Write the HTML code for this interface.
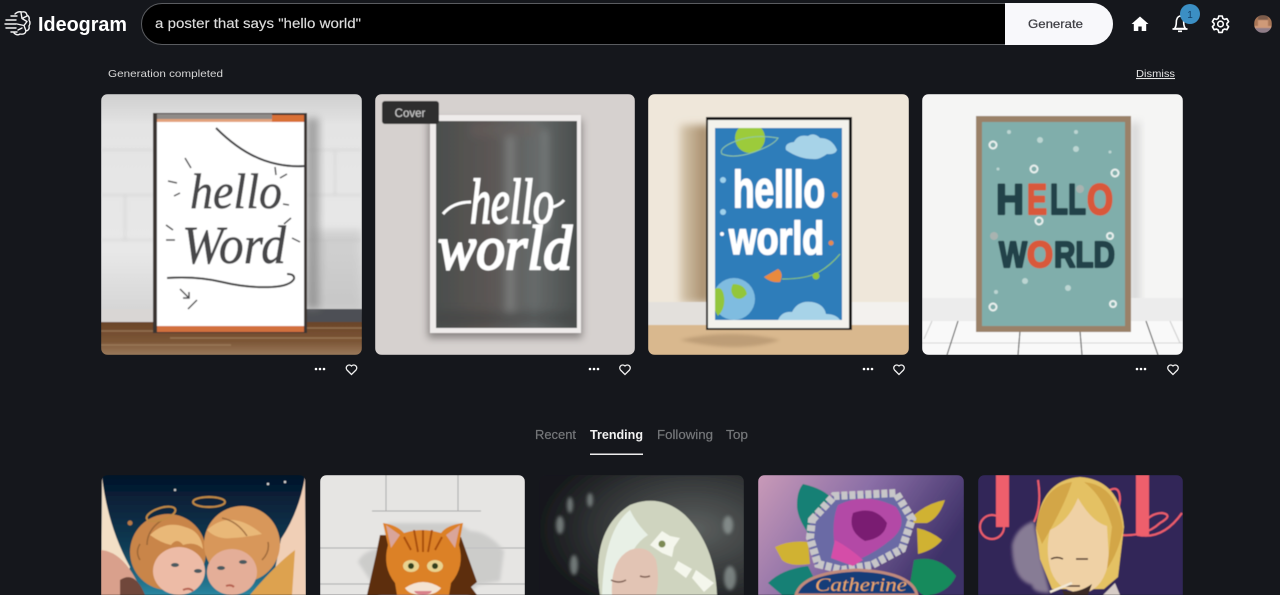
<!DOCTYPE html>
<html><head><meta charset="utf-8"><title>Ideogram</title>
<style>
html,body{margin:0;padding:0;width:1280px;height:595px;overflow:hidden;background:#15171c}
svg{display:block;position:absolute;left:0;top:0}
text{font-family:"Liberation Sans",sans-serif}
.s{font-family:"Liberation Serif",serif;font-style:italic}
.b{font-family:"Liberation Sans",sans-serif;font-weight:700}
</style></head><body>
<svg width="1280" height="595" viewBox="0 0 1280 595" xmlns="http://www.w3.org/2000/svg">
<defs>
<linearGradient id="wall1" x1="0" y1="0" x2="0" y2="1"><stop offset="0" stop-color="#cfcfcf"/><stop offset=".12" stop-color="#e4e4e4"/><stop offset=".6" stop-color="#e8e8e8"/><stop offset="1" stop-color="#c8c8c8"/></linearGradient>
<linearGradient id="floor1" x1="0" y1="0" x2="0" y2="1"><stop offset="0" stop-color="#6a4428"/><stop offset=".6" stop-color="#7d5737"/><stop offset="1" stop-color="#9a7a5b"/></linearGradient>
<linearGradient id="rose" x1="0" y1="0" x2="1" y2=".4"><stop offset="0" stop-color="#c99ab8"/><stop offset=".5" stop-color="#8a6ea6"/><stop offset="1" stop-color="#3e3168"/></linearGradient>
<radialGradient id="fairy" cx=".75" cy=".45" r=".75"><stop offset="0" stop-color="#5c605f"/><stop offset="1" stop-color="#17191c"/></radialGradient>
<linearGradient id="ang" x1="0" y1="0" x2="0" y2="1"><stop offset="0" stop-color="#04142a"/><stop offset=".6" stop-color="#103c55"/><stop offset="1" stop-color="#2a86a0"/></linearGradient>
<linearGradient id="chalk" x1="0" y1="0" x2="1" y2="0"><stop offset="0" stop-color="#4b4f4e"/><stop offset=".35" stop-color="#5a5553"/><stop offset=".7" stop-color="#666a6a"/><stop offset="1" stop-color="#4a4e4d"/></linearGradient>
<linearGradient id="shadow3" x1="0" y1="0" x2="1" y2="0"><stop offset="0" stop-color="#d8c9b0"/><stop offset="1" stop-color="#9f8360"/></linearGradient>
<filter id="bl" x="-50%" y="-20%" width="200%" height="140%"><feGaussianBlur stdDeviation="4"/></filter>
<filter id="sb" x="-30%" y="-30%" width="160%" height="160%"><feGaussianBlur stdDeviation="1.500"/></filter>
<filter id="tb" x="0" y="0" width="100%" height="100%"><feGaussianBlur stdDeviation=".5"/></filter>
<clipPath id="c1"><rect x="101" y="94" width="261" height="261" rx="7"/></clipPath>
<clipPath id="c2"><rect x="375" y="94" width="260" height="261" rx="7"/></clipPath>
<clipPath id="c3"><rect x="648" y="94" width="261" height="261" rx="7"/></clipPath>
<clipPath id="c4"><rect x="922" y="94" width="261" height="261" rx="7"/></clipPath>
<clipPath id="p2"><rect x="436" y="121" width="141" height="207"/></clipPath>
<clipPath id="p3"><rect x="715" y="128" width="127" height="192"/></clipPath>
<clipPath id="av"><circle cx="1263" cy="24" r="9"/></clipPath>
<clipPath id="d1"><path d="M101 482a7 7 0 0 1 7-7h191a7 7 0 0 1 7 7v113H101z"/></clipPath>
<clipPath id="d2"><path d="M320 482a7 7 0 0 1 7-7h191a7 7 0 0 1 7 7v113H320z"/></clipPath>
<clipPath id="d3"><path d="M539 482a7 7 0 0 1 7-7h191a7 7 0 0 1 7 7v113H539z"/></clipPath>
<clipPath id="d4"><path d="M758 482a7 7 0 0 1 7-7h192a7 7 0 0 1 7 7v113H758z"/></clipPath>
<clipPath id="d5"><path d="M978 482a7 7 0 0 1 7-7h191a7 7 0 0 1 7 7v113H978z"/></clipPath>
</defs>

<rect width="1280" height="595" fill="#15171c"/>

<!-- logo -->
<g fill="none" stroke="#f2f2f2" stroke-width="1.400" stroke-linecap="round" stroke-linejoin="round">
<path d="M15 14q3-3 7-2q4-1 5 3q3 2 2 5q2 3 0 6q1 4-3 5q-1 4-6 3q-3 2-6-1"/>
<path d="M6 20h10M5 24h11M6 28h10M11 16h6M11 32h6"/>
<path d="M21 12.500l1 6l5 3l-3 4l2 5.500M27 16l-5 2.500M22 28l-4 2M24 25.500l-7-1.500"/>
</g>
<text x="38" y="31" font-size="20" fill="#fff" class="b" textLength="89" lengthAdjust="spacingAndGlyphs">Ideogram</text>

<!-- prompt -->
<rect x="141.500" y="3.500" width="971" height="41" rx="20.500" fill="#000" stroke="#5a5c60"/>
<path d="M1005 3h87a21 21 0 0 1 21 21a21 21 0 0 1-21 21h-87z" fill="#f8f8fb"/>
<text x="155" y="28" font-size="13.500" fill="#dcdcdc" stroke="#dcdcdc" stroke-width=".15" textLength="206" lengthAdjust="spacingAndGlyphs">a poster that says "hello world"</text>
<text x="1028" y="28" font-size="12" fill="#3f3f45" stroke="#3f3f45" stroke-width=".25" textLength="55" lengthAdjust="spacingAndGlyphs">Generate</text>

<!-- nav icons -->
<path d="M1140 16.500l-8.500 7.500h2.300v7h4.500v-4.500h3.400v4.500h4.500v-7h2.300z" fill="#fff"/>
<path d="M1174.500 28.500q1.800-2 1.800-6q0-5.500 3.700-6.500q3.700 1 3.700 6.500q0 4 1.800 6z" fill="none" stroke="#fff" stroke-width="1.600"/>
<path d="M1172.500 29h15M1178 31.300h4" stroke="#fff" stroke-width="1.700" fill="none"/>
<circle cx="1190" cy="14" r="10" fill="#3b8fc4"/>
<text x="1190" y="18" font-size="10" fill="#12406a" text-anchor="middle">1</text>
<g fill="none" stroke="#fff" stroke-width="1.600" stroke-linejoin="round">
<circle cx="1220.500" cy="24" r="2.800"/>
<path d="M1218.800 16h3.400l.6 2.400l1.800 1l2.300-.7l1.700 3l-1.700 1.700v1.600l1.700 1.700l-1.700 3l-2.300-.7l-1.800 1l-.6 2.400h-3.400l-.6-2.400l-1.800-1l-2.300.7l-1.700-3l1.700-1.700v-1.600l-1.700-1.700l1.700-3l2.300.7l1.800-1z"/>
</g>
<g clip-path="url(#av)"><g filter="url(#tb)">
<rect x="1254" y="15" width="18" height="18" fill="#cf9a78"/>
<rect x="1254" y="15" width="18" height="5" fill="#7b5c4b"/>
<path d="M1254 15h4v11h-4zM1268 15h4v11h-4z" fill="#a87657"/>
<rect x="1254" y="28" width="18" height="5" fill="#8f7d88"/>
</g></g>

<!-- status -->
<text x="108" y="77" font-size="10.500" fill="#d6d6d6" textLength="115" lengthAdjust="spacingAndGlyphs">Generation completed</text>
<text x="1136" y="77" font-size="10.500" fill="#e6e6e6" text-decoration="underline" textLength="39" lengthAdjust="spacingAndGlyphs">Dismiss</text>

<!-- CARD 1 -->
<g clip-path="url(#c1)"><g filter="url(#tb)">
<rect x="101" y="94" width="261" height="261" fill="url(#wall1)"/>
<g stroke="#d4d4d4" stroke-width="1.500" fill="none" filter="url(#sb)">
<path d="M101 150h52M101 195h52M101 240h52M307 150h55M307 195h55M307 240h55M125 195v45M335 150v45M325 240v40"/>
</g>
<path d="M310 230h52v80h-52z" fill="#b8b8b8" opacity=".5" filter="url(#bl)"/>
<rect x="101" y="309" width="60" height="13" fill="#d9d6d4"/>
<rect x="307" y="309" width="55" height="13" fill="#4e5055"/>
<rect x="101" y="322" width="261" height="33" fill="url(#floor1)"/>
<path d="M101 331h100M170 338h192M101 345h130M250 328h112" stroke="#a98a68" stroke-width="1.500" opacity=".6"/>
<rect x="306" y="118" width="13" height="191" fill="#7f7f7f" opacity=".65" filter="url(#bl)"/>
<rect x="153" y="113" width="154" height="220" fill="#3b3431"/>
<rect x="157" y="116" width="147" height="214" fill="#fff"/>
<rect x="157" y="114" width="115" height="5" fill="#8f8b88"/>
<rect x="157" y="119" width="147" height="3" fill="#e3a27b"/>
<rect x="272" y="115" width="32" height="7" fill="#d96f35"/>
<rect x="157" y="326" width="147" height="6" fill="#d2703c"/>
<path d="M216 128q30 30 61 36q14 3 28 2" fill="none" stroke="#3b3b3d" stroke-width="2"/>
<text x="190" y="208" font-size="50" fill="#474749" stroke="#474749" stroke-width=".5" class="s" textLength="92" lengthAdjust="spacingAndGlyphs">hello</text>
<text x="182" y="263" font-size="54" fill="#474749" stroke="#474749" stroke-width=".5" class="s" textLength="104" lengthAdjust="spacingAndGlyphs">Word</text>
<path d="M167 278q30-2 55 4t50 5q18-1 22-8q1-5-7-5" fill="none" stroke="#3c3c3e" stroke-width="2"/>
<path d="M180 289l9 9m0-6v6h-6M197 300l-9 9M185 158l6 10M168 181l9 2M174 196l6-3M275 167l1 8M280 178l7-4M283 204l6 1M166 225l7 5M166 240h9M284 224l7-6M292 238l8 4" fill="none" stroke="#4a4a4c" stroke-width="1.500"/>
</g></g>

<!-- CARD 2 -->
<g clip-path="url(#c2)"><g filter="url(#tb)">
<rect x="375" y="94" width="260" height="261" fill="#d6d1cf"/>
<rect x="428" y="120" width="154" height="218" fill="#6e6b69" filter="url(#bl)" opacity=".75"/>
<rect x="430" y="115" width="151" height="218" fill="#efeceb"/>
<rect x="436" y="121" width="141" height="207" fill="url(#chalk)"/>
<g clip-path="url(#p2)"><g filter="url(#bl)" opacity=".4"><path d="M510 130v190" stroke="#a0a4a4" stroke-width="9"/><path d="M545 130v100" stroke="#9a9e9e" stroke-width="7"/><path d="M470 130h70" stroke="#6c6460" stroke-width="14"/><path d="M436 318h140" stroke="#3c403f" stroke-width="14"/></g></g>
<text x="470" y="223" font-size="64" fill="#fff" stroke="#fff" stroke-width="1.800" class="s" textLength="84" lengthAdjust="spacingAndGlyphs">hello</text>
<path d="M443 214q10-12 28-12M553 207q7-2 11-7" fill="none" stroke="#fff" stroke-width="3"/>
<text x="438" y="269" font-size="62" fill="#fff" stroke="#fff" stroke-width="2.200" class="s" textLength="134" lengthAdjust="spacingAndGlyphs">world</text>
<rect x="382" y="101" width="57" height="23" rx="3" fill="#2e2d2e"/>
<text x="410" y="117" font-size="11.500" fill="#d5d5d5" text-anchor="middle">Cover</text>
</g></g>

<!-- CARD 3 -->
<g clip-path="url(#c3)"><g filter="url(#tb)">
<rect x="648" y="94" width="261" height="261" fill="#efe7da"/>
<rect x="680" y="125" width="30" height="178" fill="url(#shadow3)" filter="url(#bl)"/>
<rect x="648" y="302" width="261" height="23" fill="#f3f1ee"/>
<rect x="648" y="302" width="58" height="23" fill="#e3e0dc"/>
<rect x="648" y="325" width="261" height="30" fill="#d9b88e"/>
<path d="M680 340q50-12 100 0q-40 14-100 0z" fill="#ab8c68" opacity=".6" filter="url(#sb)"/>
<rect x="706" y="117" width="146" height="213" fill="#191414"/>
<rect x="708" y="120" width="141" height="208" fill="#f3f2ec"/>
<rect x="715" y="128" width="127" height="192" fill="#2f7dba"/>
<g clip-path="url(#p3)">
<circle cx="750" cy="138" r="15" fill="#9ccb3b"/>
<path d="M722 154q-4-6 14-13t42-3q-4 7-24 14t-32 2z" fill="none" stroke="#8fc8a0" stroke-width="1"/>
<path d="M786 150q-2-7 8-8q4-8 14-6q6-4 12 2q12 0 17 12q-2 5-10 4q-8 6-14 5q-14 0-27-9z" fill="#a7d3e8"/>
<path d="M778 320q4-9 14-8q6-12 20-10q12 2 14 12q10 0 14 6z" fill="#a7d3e8"/>
<circle cx="734" cy="299" r="21" fill="#7fbce0"/>
<path d="M713 290q9-6 11 6t-6 20q-8-12-5-26zM733 284q12 0 14 10q-6 8-13 3q-5-6-1-13z" fill="#93c63a"/>
<path d="M764 277l14-8q6 4 2 13q-9 1-16-5z" fill="#e98a3c"/>
<path d="M782 279q25 0 37-7t21-18" fill="none" stroke="#8ecb6a" stroke-width="1"/>
<circle cx="816" cy="276" r="3.500" fill="#93c63a"/>
</g>
<circle cx="723" cy="180" r="3" fill="#9fd2ec"/><circle cx="723" cy="212" r="3" fill="#9fd2ec"/><circle cx="722" cy="234" r="2" fill="#fff"/>
<circle cx="835" cy="195" r="3" fill="#e58b4e"/><circle cx="831" cy="243" r="2.500" fill="#e58b4e"/>
<text x="733" y="207" font-size="52" fill="#fff" stroke="#fff" stroke-width="1.600" stroke-linejoin="round" class="b" textLength="92" lengthAdjust="spacingAndGlyphs">helllo</text>
<text x="729" y="254" font-size="46" fill="#fff" stroke="#fff" stroke-width="1.600" stroke-linejoin="round" class="b" textLength="95" lengthAdjust="spacingAndGlyphs">world</text>
</g></g>

<!-- CARD 4 -->
<g clip-path="url(#c4)"><g filter="url(#tb)">
<rect x="922" y="94" width="261" height="261" fill="#f5f5f4"/>
<rect x="1130" y="122" width="10" height="190" fill="#c4c4c4" opacity=".6" filter="url(#bl)"/>
<rect x="922" y="298" width="261" height="23" fill="#ececec"/>
<rect x="922" y="321" width="261" height="34" fill="#f9f9f9"/>
<path d="M922 343h261" stroke="#d5d5d5" stroke-width="1" fill="none"/>
<path d="M958 321l-11 34M1020 331l-2 24M1080 331l2 24M1146 321l12 34" stroke="#333" stroke-width="1" fill="none"/>
<path d="M932 321l-8 18M1170 321l10 22" stroke="#ccc" stroke-width="1" fill="none"/>
<rect x="976" y="116" width="155" height="216" fill="#9a8168"/>
<rect x="982" y="122" width="143" height="204" fill="#80aeab"/>
<g fill="none" stroke="#e9f0ee" stroke-width="2">
<circle cx="993" cy="145" r="3.500"/><circle cx="1034" cy="169" r="3.500"/><circle cx="1115" cy="173" r="3.500"/><circle cx="1039" cy="221" r="3.500"/><circle cx="1110" cy="236" r="3"/><circle cx="993" cy="307" r="3.500"/><circle cx="1113" cy="304" r="3"/>
</g>
<g fill="#bcd5d2"><circle cx="1009" cy="132" r="2"/><circle cx="1040" cy="140" r="3"/><circle cx="1076" cy="132" r="2"/><circle cx="1076" cy="149" r="3"/><circle cx="1110" cy="152" r="1.500"/><circle cx="998" cy="169" r="1.500"/><circle cx="1025" cy="281" r="3"/><circle cx="1068" cy="288" r="3"/><circle cx="996" cy="292" r="2"/><circle cx="994" cy="236" r="4" fill="#a9b3b0"/><circle cx="1080" cy="189" r="4" fill="#a9b3b0"/></g>
<g stroke-width="2.200" stroke-linejoin="round">
<text x="996" y="214" font-size="43" class="b" fill="#20434a" stroke="#20434a" textLength="28" lengthAdjust="spacingAndGlyphs">H</text>
<text x="1027" y="214" font-size="43" class="b" fill="#d9583a" stroke="#d9583a" textLength="20" lengthAdjust="spacingAndGlyphs">E</text>
<text x="1050" y="214" font-size="43" class="b" fill="#20434a" stroke="#20434a" textLength="36" lengthAdjust="spacingAndGlyphs">LL</text>
<text x="1087" y="214" font-size="43" class="b" fill="#d9583a" stroke="#d9583a" textLength="26" lengthAdjust="spacingAndGlyphs">O</text>
<text x="999" y="267" font-size="36" class="b" fill="#20434a" stroke="#20434a" textLength="28" lengthAdjust="spacingAndGlyphs">W</text>
<text x="1027" y="267" font-size="36" class="b" fill="#d9583a" stroke="#d9583a" textLength="26" lengthAdjust="spacingAndGlyphs">O</text>
<text x="1054" y="267" font-size="36" class="b" fill="#20434a" stroke="#20434a" textLength="61" lengthAdjust="spacingAndGlyphs">RLD</text>
</g>
</g></g>

<!-- action icons -->
<g fill="#fff">
<circle cx="316" cy="369" r="1.300"/><circle cx="320" cy="369" r="1.300"/><circle cx="324" cy="369" r="1.300"/>
<circle cx="590" cy="369" r="1.300"/><circle cx="594" cy="369" r="1.300"/><circle cx="598" cy="369" r="1.300"/>
<circle cx="864" cy="369" r="1.300"/><circle cx="868" cy="369" r="1.300"/><circle cx="872" cy="369" r="1.300"/>
<circle cx="1137" cy="369" r="1.300"/><circle cx="1141" cy="369" r="1.300"/><circle cx="1145" cy="369" r="1.300"/>
</g>
<g fill="none" stroke="#f0f0f0" stroke-width="1.300">
<path d="M351.500 374.500l-4.500-4.500a3 3 0 0 1 4.500-4a3 3 0 0 1 4.500 4z"/>
<path d="M625 374.500l-4.500-4.500a3 3 0 0 1 4.500-4a3 3 0 0 1 4.500 4z"/>
<path d="M899 374.500l-4.500-4.500a3 3 0 0 1 4.500-4a3 3 0 0 1 4.500 4z"/>
<path d="M1173 374.500l-4.500-4.500a3 3 0 0 1 4.500-4a3 3 0 0 1 4.500 4z"/>
</g>

<!-- tabs -->
<text x="535" y="439" font-size="12.500" fill="#75777a" stroke="#75777a" stroke-width=".2" textLength="41" lengthAdjust="spacingAndGlyphs">Recent</text>
<text x="590" y="439" font-size="12.500" fill="#f2f2f2" font-weight="700" textLength="53" lengthAdjust="spacingAndGlyphs">Trending</text>
<text x="657" y="439" font-size="12.500" fill="#75777a" stroke="#75777a" stroke-width=".2" textLength="56" lengthAdjust="spacingAndGlyphs">Following</text>
<text x="726" y="439" font-size="12.500" fill="#75777a" stroke="#75777a" stroke-width=".2" textLength="22" lengthAdjust="spacingAndGlyphs">Top</text>
<rect x="590" y="453.500" width="53" height="1.500" fill="#eee"/>

<!-- Bottom 1: angels -->
<g clip-path="url(#d1)"><g filter="url(#tb)">
<rect x="101" y="475" width="205" height="120" fill="url(#ang)"/>
<path d="M102 477q6 50 28 90l-8 28H101z" fill="#f3dfc6"/>
<path d="M101 550q25 2 42 45h-42z" fill="#d9a08c"/>
<path d="M120 580q15-10 25 15h-25z" fill="#70463a"/>
<path d="M305 477q-6 35-24 62l-11 56h36z" fill="#f0cfb6"/>
<path d="M250 595q25-30 45-45l-3 45z" fill="#dda24f"/>
<circle cx="168" cy="552" r="38" fill="#c98548"/>
<circle cx="242" cy="544" r="38" fill="#d8975a"/>
<ellipse cx="179" cy="571" rx="26" ry="24" fill="#edbba6"/>
<ellipse cx="232" cy="572" rx="25" ry="23" fill="#e4ae98"/>
<path d="M150 535q15-15 35-8q16 4 18 22q-8-8-20-4q-6-8-12 0q-10-2-21-10zM207 530q24-22 55 4q-20 4-30 4q-15 2-25-8z" fill="#e9b878"/>
<g fill="none" stroke="#8a5a30" stroke-width="1.500" opacity=".7"><path d="M147 545q0-15 15-25M222 518q15 3 25 18M140 560q-5-8 0-16M262 560q8-8 6-18"/></g>
<ellipse cx="161" cy="514" rx="15" ry="6" fill="none" stroke="#c18a45" stroke-width="2" transform="rotate(-18 161 514)"/>
<ellipse cx="209" cy="502" rx="16" ry="5" fill="none" stroke="#c18a45" stroke-width="2"/>
<g fill="#4c5a60"><ellipse cx="175" cy="565" rx="4" ry="2"/><ellipse cx="198" cy="571" rx="4" ry="2"/><ellipse cx="221" cy="568" rx="4" ry="2"/><ellipse cx="243" cy="562" rx="4" ry="2"/></g>
<path d="M183 590q6-3 10 1M226 586q5-2 8 1" stroke="#b5604f" stroke-width="2" fill="none"/>
<circle cx="130" cy="523" r="2.500" fill="#b57a45"/><circle cx="175" cy="490" r="1.200" fill="#ccc"/><circle cx="268" cy="484" r="1.200" fill="#ddd"/><circle cx="285" cy="482" r="1.200" fill="#ddd"/>
</g></g>

<!-- Bottom 2: cat -->
<g clip-path="url(#d2)"><g filter="url(#tb)">
<rect x="320" y="475" width="205" height="120" fill="#e6e5e3"/>
<path d="M320 548h205M320 584h205M386 475v36M458 475v36M372 511h109" stroke="#a9a9a9" stroke-width="1" fill="none"/>
<path d="M358 562q5-12 25-14l5-25h70l12 8q18 0 34 20l-4 30l-22 4l-10 10H380z" fill="#c6c6c5" opacity=".8" filter="url(#sb)"/>
<path d="M380 535l-4 20l-9 40h110l-6-8l6-5l-16-45z" fill="#5d2f11"/>
<path d="M388 545l-5-22q14 2 21 10q18-6 37 0q6-8 22-10l-4 22q6 22-8 38l-2 12h-52l-2-12q-13-16-7-38z" fill="#dc8126"/>
<path d="M386 525l14 10l-9 13zM460 525l-14 10l9 13z" fill="#d9a59a"/>
<path d="M414 530l4 22M423 530v22M432 530l-4 22M404 537l7 13M442 537l-7 13" stroke="#a94f10" stroke-width="2"/>
<ellipse cx="411" cy="566" rx="8" ry="6" fill="#e9d38f"/><ellipse cx="435" cy="566" rx="8" ry="6" fill="#e9d38f"/>
<circle cx="411" cy="566" r="3" fill="#32401f"/><circle cx="435" cy="566" r="3" fill="#32401f"/>
<path d="M405 588q18-12 36 0q-5 7-18 7q-14 0-18-7z" fill="#f4e3d2"/>
<path d="M414 591h18q-2 4-9 4t-9-4z" fill="#d9808a"/>
</g></g>

<!-- Bottom 3: fairy -->
<g clip-path="url(#d3)"><g filter="url(#tb)">
<rect x="539" y="475" width="205" height="120" fill="url(#fairy)"/>
<g fill="#a6b1ae" opacity=".6" filter="url(#sb)"><ellipse cx="560" cy="525" rx="4" ry="9"/><ellipse cx="570" cy="505" rx="3" ry="8"/><ellipse cx="574" cy="565" rx="4" ry="10"/><ellipse cx="590" cy="500" rx="3" ry="7"/><ellipse cx="728" cy="525" rx="5" ry="9"/><ellipse cx="730" cy="578" rx="6" ry="12"/></g>
<path d="M600 595q-10-65 30-90q30-12 55 10q30 30 32 80z" fill="#cfd4bf"/>
<path d="M630 510q-26 20-28 85h20q2-45 26-60q-12-12-18-25z" fill="#e8f0e6"/>
<path d="M612 595q-2-35 18-45q18-6 26 10q4 20 0 35z" fill="#e2c4b4"/>
<path d="M611 580q8 4 15 0M640 576q5 2 10 0" stroke="#7c5c50" stroke-width="1.500" fill="none"/>
<g fill="#f4f6ec"><path d="M650 545l12-14l8 5l10 2l-6 9l-2 10l-10-4z"/><path d="M678 561l14 8l-6 9l-12-9zM696 570l18 13l-10 9l-12-14z"/></g>
<circle cx="662" cy="544" r="3.500" fill="#7b8a52"/>
</g></g>

<!-- Bottom 4: rose -->
<g clip-path="url(#d4)"><g filter="url(#tb)">
<rect x="758" y="475" width="206" height="120" fill="url(#rose)"/>
<path d="M803 484q22 5 30 16l-18 12l-4 25q-14-18-14-32q0-14 6-21z" fill="#128074"/>
<path d="M914 560q25-6 42 16q-8 18-32 20l-14-12z" fill="#138a5c"/>
<path d="M768 583q14-14 40-17l6 12l-8 17h-24z" fill="#128074"/>
<path d="M914 515q14-12 31-15q-6 18-18 23h-14zM775 547q15-7 33-5l2 22q-20 3-28-4zM917 528q14 3 25 12q-8 10-24 14z" fill="#d0b232"/>
<path d="M810 522l24-28h65l15 25l-8 30l-34 18l-28 5l-28-6l-8-24z" fill="#6a6aa5"/>
<path d="M812 520l22-24l62-3l16 26l-10 30l-30 16l-30 5l-24-6l-8-26z" fill="none" stroke="#c7c6c8" stroke-width="8" stroke-dasharray="6 2"/>
<path d="M838 505q28-14 58 2q12 16-2 30q-16 14-34 22q-24 0-26-18q-2-22 4-36z" fill="#b34aa6"/>
<path d="M853 513q22-8 34 10q-2 15-22 18q-18-10-12-28z" fill="#7a1f72"/>
<path d="M835 540q15 8 28 20l-10 6l-22-8z" fill="#d54ea8"/>
<path d="M796 595q6-22 60-25q56 2 61 25z" fill="#173d78" stroke="#c08a7c" stroke-width="3"/>
<text x="815" y="591" font-size="19" class="s" fill="#eca86a" textLength="92" lengthAdjust="spacingAndGlyphs">Catherine</text>
</g></g>

<!-- Bottom 5: anime -->
<g clip-path="url(#d5)"><g filter="url(#tb)">
<rect x="978" y="475" width="205" height="120" fill="#332659"/>
<g fill="#ee5f6c"><rect x="996" y="475" width="13" height="52"/><rect x="1136" y="475" width="13" height="60"/></g>
<g fill="none" stroke="#ee5f6c" stroke-width="2">
<circle cx="992" cy="527" r="12"/><path d="M1038 480q4 25-4 42M1110 490q-10 15-4 35q10 5 14-25q0-15-10-10zM1120 535q25 2 40-12q14-8 2-10q-16 0-24 22q25 5 44-22"/>
</g>
<path d="M1012 545q4-18 22-24l8 40l8 32q-18 0-18-8q-20-5-20-40z" fill="#a498a9" opacity=".75" filter="url(#sb)"/>
<path d="M1036 530q4-50 44-53q40 3 44 50l-6 50l-14 12h-52l-12-30z" fill="#e4c164"/>
<path d="M1050 530q18-8 28-32q14 24 29 28l2 34q-5 28-24 33q-26 0-34-22q-6-20-1-41z" fill="#efd1a5"/>
<path d="M1072 482q-8 25-30 62l-6-16q6-42 36-46zM1084 482q20 15 28 45l-5 42q12-18 16-40q-6-44-39-47z" fill="#d3a646"/>
<path d="M1051 559q6-3 12 0M1076 559h12M1065 586h15" stroke="#4a3328" stroke-width="1.500" fill="none"/>
<path d="M1050 592l22-9" stroke="#f2e8d6" stroke-width="2.500"/>
<path d="M1103 595l12-12l5 12z" fill="#d6cbc5"/>
<path d="M1062 590q14 5 30-6l-4 11h-24z" fill="#3a2a25"/>
</g></g>
</svg>
</body></html>
